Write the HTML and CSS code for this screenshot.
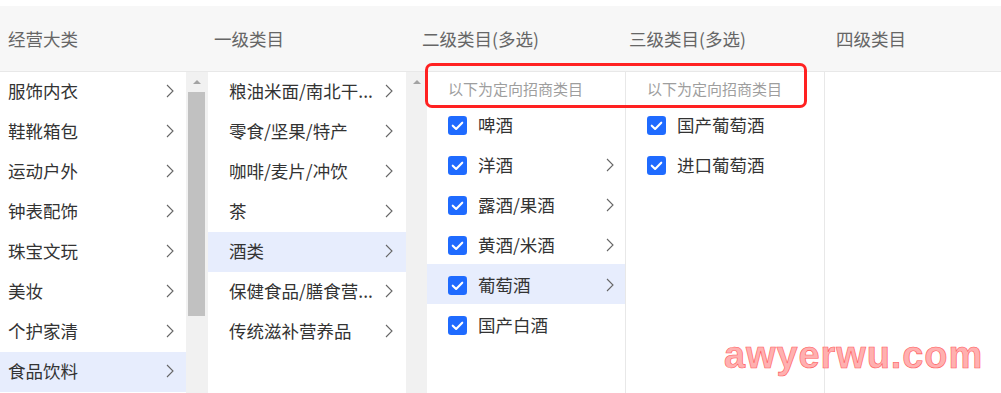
FILE: index.html
```html
<!DOCTYPE html>
<html lang="zh-CN">

<head>
  <meta charset="UTF-8">
  <meta name="viewport" content="width=device-width, initial-scale=1.0">
  <title>类目选择</title>
  <link rel="stylesheet" href="styles.css">
</head>

<body>
  <div class="cascader">
    <div class="head">
      <div class="head-cell w1">经营大类</div>
      <div class="head-cell w2">一级类目</div>
      <div class="head-cell w3">二级类目(多选)</div>
      <div class="head-cell w4">三级类目(多选)</div>
      <div class="head-cell">四级类目</div>
    </div>

    <div class="body">
      <!-- 经营大类 -->
      <div class="col col-1">
        <ul class="list">
          <li class="item"><span>服饰内衣</span><svg class="arrow" viewBox="0 0 8 14"><path d="M1 1l6 6-6 6"/></svg></li>
          <li class="item"><span>鞋靴箱包</span><svg class="arrow" viewBox="0 0 8 14"><path d="M1 1l6 6-6 6"/></svg></li>
          <li class="item"><span>运动户外</span><svg class="arrow" viewBox="0 0 8 14"><path d="M1 1l6 6-6 6"/></svg></li>
          <li class="item"><span>钟表配饰</span><svg class="arrow" viewBox="0 0 8 14"><path d="M1 1l6 6-6 6"/></svg></li>
          <li class="item"><span>珠宝文玩</span><svg class="arrow" viewBox="0 0 8 14"><path d="M1 1l6 6-6 6"/></svg></li>
          <li class="item"><span>美妆</span><svg class="arrow" viewBox="0 0 8 14"><path d="M1 1l6 6-6 6"/></svg></li>
          <li class="item"><span>个护家清</span><svg class="arrow" viewBox="0 0 8 14"><path d="M1 1l6 6-6 6"/></svg></li>
          <li class="item active"><span>食品饮料</span><svg class="arrow" viewBox="0 0 8 14"><path d="M1 1l6 6-6 6"/></svg></li>
        </ul>
        <div class="scrollbar">
          <i class="sb-up"></i>
          <div class="sb-thumb"></div>
        </div>
      </div>

      <!-- 一级类目 -->
      <div class="col col-2">
        <ul class="list">
          <li class="item"><span>粮油米面/南北干...</span><svg class="arrow" viewBox="0 0 8 14"><path d="M1 1l6 6-6 6"/></svg></li>
          <li class="item"><span>零食/坚果/特产</span><svg class="arrow" viewBox="0 0 8 14"><path d="M1 1l6 6-6 6"/></svg></li>
          <li class="item"><span>咖啡/麦片/冲饮</span><svg class="arrow" viewBox="0 0 8 14"><path d="M1 1l6 6-6 6"/></svg></li>
          <li class="item"><span>茶</span><svg class="arrow" viewBox="0 0 8 14"><path d="M1 1l6 6-6 6"/></svg></li>
          <li class="item active"><span>酒类</span><svg class="arrow" viewBox="0 0 8 14"><path d="M1 1l6 6-6 6"/></svg></li>
          <li class="item"><span>保健食品/膳食营...</span><svg class="arrow" viewBox="0 0 8 14"><path d="M1 1l6 6-6 6"/></svg></li>
          <li class="item"><span>传统滋补营养品</span><svg class="arrow" viewBox="0 0 8 14"><path d="M1 1l6 6-6 6"/></svg></li>
        </ul>
        <div class="scrollbar">
          <i class="sb-up"></i>
        </div>
      </div>

      <!-- 二级类目 -->
      <div class="col col-3">
        <ul class="list">
          <li class="hint">以下为定向招商类目</li>
          <li class="item check"><svg class="box" viewBox="0 0 18 18"><rect width="18" height="18" rx="3"/><path d="M4.5 9.2l3.2 3.1 5.8-6"/></svg><span>啤酒</span></li>
          <li class="item check"><svg class="box" viewBox="0 0 18 18"><rect width="18" height="18" rx="3"/><path d="M4.5 9.2l3.2 3.1 5.8-6"/></svg><span>洋酒</span><svg class="arrow" viewBox="0 0 8 14"><path d="M1 1l6 6-6 6"/></svg></li>
          <li class="item check"><svg class="box" viewBox="0 0 18 18"><rect width="18" height="18" rx="3"/><path d="M4.5 9.2l3.2 3.1 5.8-6"/></svg><span>露酒/果酒</span><svg class="arrow" viewBox="0 0 8 14"><path d="M1 1l6 6-6 6"/></svg></li>
          <li class="item check"><svg class="box" viewBox="0 0 18 18"><rect width="18" height="18" rx="3"/><path d="M4.5 9.2l3.2 3.1 5.8-6"/></svg><span>黄酒/米酒</span><svg class="arrow" viewBox="0 0 8 14"><path d="M1 1l6 6-6 6"/></svg></li>
          <li class="item check active"><svg class="box" viewBox="0 0 18 18"><rect width="18" height="18" rx="3"/><path d="M4.5 9.2l3.2 3.1 5.8-6"/></svg><span>葡萄酒</span><svg class="arrow" viewBox="0 0 8 14"><path d="M1 1l6 6-6 6"/></svg></li>
          <li class="item check"><svg class="box" viewBox="0 0 18 18"><rect width="18" height="18" rx="3"/><path d="M4.5 9.2l3.2 3.1 5.8-6"/></svg><span>国产白酒</span></li>
        </ul>
      </div>

      <!-- 三级类目 -->
      <div class="col col-4">
        <ul class="list">
          <li class="hint">以下为定向招商类目</li>
          <li class="item check"><svg class="box" viewBox="0 0 18 18"><rect width="18" height="18" rx="3"/><path d="M4.5 9.2l3.2 3.1 5.8-6"/></svg><span>国产葡萄酒</span></li>
          <li class="item check"><svg class="box" viewBox="0 0 18 18"><rect width="18" height="18" rx="3"/><path d="M4.5 9.2l3.2 3.1 5.8-6"/></svg><span>进口葡萄酒</span></li>
        </ul>
      </div>

      <!-- 四级类目 -->
      <div class="col col-5"></div>
    </div>

    <div class="mark-box"></div>
    <div class="watermark">awyerwu.com</div>
  </div>
</body>
</html>
```

FILE: styles.css
```css
* {
  margin: 0;
  padding: 0;
  box-sizing: border-box;
}
body {
  font-family: "Noto Sans CJK SC", "Noto Sans", sans-serif;
  background: #fff;
  color: #333;
}
ul {
  list-style: none;
}
.cascader {
  position: relative;
  width: 1001px;
  height: 393px;
  padding-top: 6px;
  overflow: hidden;
}
.head {
  display: flex;
  height: 66px;
  background: #f7f7f7;
  border-bottom: 1px solid #e8e8e8;
}
.head-cell {
  display: flex;
  align-items: center;
  padding: 0 0 1px 8px;
  font-size: 17.5px;
  color: #666;
  white-space: nowrap;
}
.head-cell.w1 { width: 206px; }
.head-cell.w2 { width: 208px; }
.head-cell.w3 { width: 207px; }
.head-cell.w4 { width: 207px; }

.body {
  display: flex;
  height: 321px;
}
.col {
  display: flex;
  height: 100%;
}
.col-1 { width: 208px; }
.col-2 { width: 219px; }
.col-3 { width: 199px; border-right: 1px solid #e8e8e8; }
.col-4 { width: 199px; border-right: 1px solid #e8e8e8; }
.col-5 { flex: 1; }
.list {
  flex: 1;
}

.item {
  display: flex;
  align-items: center;
  height: 40px;
  font-size: 17.5px;
  color: #333;
  white-space: nowrap;
}
.col-1 .item { padding: 0 12px 3px 8px; }
.col-2 .item { padding: 0 13px 3px 21px; }
.col-3 .item, .col-4 .item { padding: 0 11px 0 21px; }
.item .arrow { margin-top: 1px; }
.item span {
  flex: 1;
}
.item.active {
  background: #e7edfd;
}
.arrow {
  width: 8px;
  height: 14px;
  fill: none;
  stroke: #666;
  stroke-width: 1.1;
}
.box {
  width: 19px;
  height: 19px;
  margin: 2px 11px 0 0;
}
.box rect {
  fill: #1f6bff;
}
.box path {
  fill: none;
  stroke: #fff;
  stroke-width: 2;
  stroke-linecap: round;
  stroke-linejoin: round;
}
.hint {
  display: flex;
  align-items: center;
  height: 32px;
  padding: 1px 0 0 21px;
  font-size: 15px;
  color: #9e9e9e;
}

.scrollbar {
  position: relative;
  width: 21px;
  background: #f1f1f1;
}
.col-1 .scrollbar { width: 22px; }
.sb-up {
  position: absolute;
  top: 8px;
  left: 7px;
  border-left: 4px solid transparent;
  border-right: 4px solid transparent;
  border-bottom: 4px solid #a3a3a3;
}
.sb-thumb {
  position: absolute;
  top: 20px;
  left: 2px;
  width: 17px;
  height: 224px;
  background: #c1c1c1;
}

/* annotation over the hint rows */
.mark-box {
  position: absolute;
  left: 425px;
  top: 63px;
  width: 382px;
  height: 45px;
  border: 3px solid #ff2121;
  border-radius: 7px;
}
.watermark {
  position: absolute;
  left: 724px;
  top: 334px;
  font-family: "Liberation Sans", Arial, sans-serif;
  font-weight: bold;
  font-size: 38px;
  letter-spacing: 0.9px;
  color: #ffb0b0;
  -webkit-text-stroke: 0.6px #ff5a5a;
}
```
